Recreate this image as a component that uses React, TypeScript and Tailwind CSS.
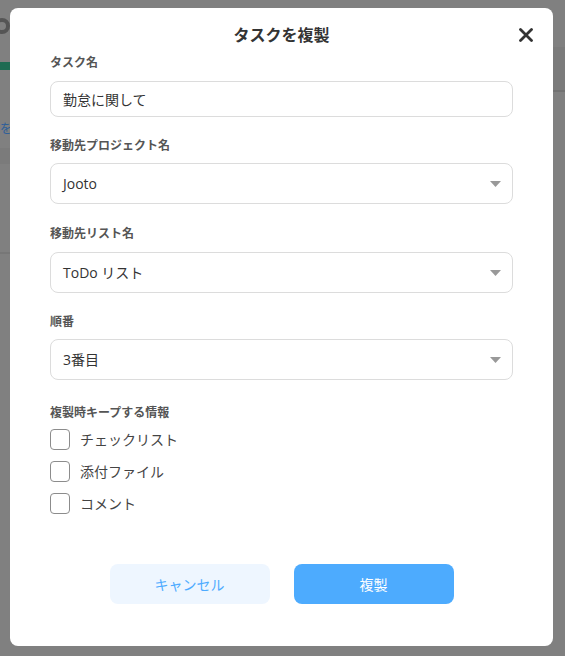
import { ReactNode } from 'react'

const font = { fontFamily: '"Open Sans", "Noto Sans CJK JP", sans-serif' }

function Label({ children }: { children: ReactNode }) {
  return <p className="h-[18px] text-[12px] font-bold leading-[18px] text-[#555]">{children}</p>
}

function Caret() {
  return (
    <svg width="11" height="6" viewBox="0 0 11 6" className="shrink-0">
      <path d="M0 0h11L5.5 6z" fill="#999" />
    </svg>
  )
}

function SelectBox({ value }: { value: string }) {
  return (
    <div className="flex h-[41px] items-center justify-between rounded-[8px] border border-[#dcdcdc] pl-[12px] pr-[11px] text-[14px] text-[#333]">
      <span>{value}</span>
      <Caret />
    </div>
  )
}

function Check({ label }: { label: string }) {
  return (
    <div className="flex h-[21px] items-center gap-[10px]">
      <span className="h-[21px] w-[20px] rounded-[4px] border border-[#8c8c8c] bg-white" />
      <span className="text-[14px] text-[#444]">{label}</span>
    </div>
  )
}

export default function App() {
  return (
    <div className="relative h-[656px] w-[565px] overflow-hidden bg-[#808080]" style={font}>
      {/* dimmed page behind the dialog */}
      <div className="flex h-full">
        <div className="flex w-[12px] flex-col">
          <div className="mt-[18px] ml-[-6px] h-[16px] w-[16px] rounded-full border-[4px] border-[#555]" />
          <div className="mt-[28px] h-[8px] bg-[#1e6b52]" />
          <div className="mt-[52px] text-[12px] leading-[14px] text-[#2f5f99]">を</div>
          <div className="mt-[12px] h-[16px] bg-[#7b7b7b]" />
          <div className="mt-[88px] h-[2px] bg-[#777]" />
        </div>
        <div className="flex-1" />
        <div className="flex w-[12px] flex-col">
          <div className="mt-[47px] h-[43px] bg-[#7b7b7b]" />
          <div className="h-[2px] bg-[#727272]" />
        </div>
      </div>

      <div className="absolute left-[10px] top-[8px] flex h-[638px] w-[543px] flex-col rounded-[8px] bg-white px-[40px]">
        <div className="relative mt-[15px] flex h-[24px] items-center justify-center">
          <h2 className="text-[16px] font-bold text-[#333]">タスクを複製</h2>
          <svg
            width="14"
            height="14"
            viewBox="0 0 14 14"
            className="absolute right-[-20px] top-[5px]"
          >
            <path d="M1.5 1.5l11 11M12.5 1.5l-11 11" stroke="#333" strokeWidth="2.8" strokeLinecap="round" />
          </svg>
        </div>

        <div className="mt-[7px]">
          <Label>タスク名</Label>
          <div className="mt-[9px] flex h-[36px] items-center rounded-[8px] border border-[#dcdcdc] px-[12px] text-[14px] text-[#333]">
            勤怠に関して
          </div>
        </div>

        <div className="mt-[20px]">
          <Label>移動先プロジェクト名</Label>
          <div className="mt-[8px]">
            <SelectBox value="Jooto" />
          </div>
        </div>

        <div className="mt-[21px]">
          <Label>移動先リスト名</Label>
          <div className="mt-[9px]">
            <SelectBox value="ToDo リスト" />
          </div>
        </div>

        <div className="mt-[20px]">
          <Label>順番</Label>
          <div className="mt-[8px]">
            <SelectBox value="3番目" />
          </div>
        </div>

        <div className="mt-[24px]">
          <Label>複製時キープする情報</Label>
          <div className="mt-[7px] flex flex-col gap-[11px]">
            <Check label="チェックリスト" />
            <Check label="添付ファイル" />
            <Check label="コメント" />
          </div>
        </div>

        <div className="mt-[50px] flex justify-center gap-[24px]">
          <button className="h-[40px] w-[160px] rounded-[8px] bg-[#eef6ff] text-[14px] text-[#4dabff]">
            キャンセル
          </button>
          <button className="h-[40px] w-[160px] rounded-[8px] bg-[#4dabfe] text-[14px] text-white">
            複製
          </button>
        </div>
      </div>
    </div>
  )
}
